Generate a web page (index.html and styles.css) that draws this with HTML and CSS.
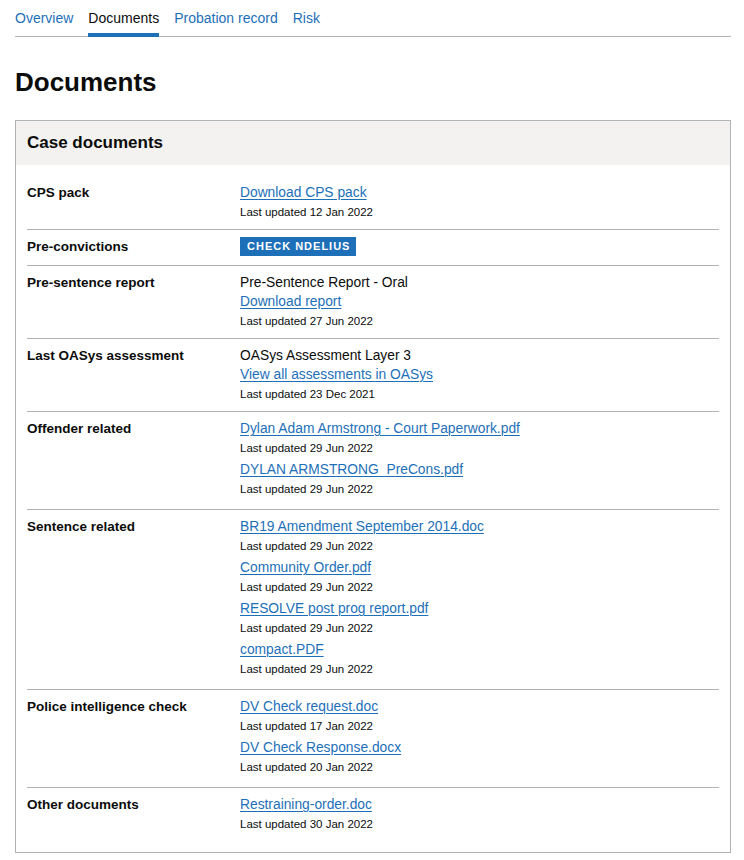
FILE: index.html
```html
<!DOCTYPE html>
<html lang="en">
<head>
<meta charset="utf-8">
<title>Documents</title>
<link rel="stylesheet" href="styles.css">
</head>
<body>
<div class="page">
  <nav class="subnav">
    <ul class="subnav-list">
      <li><a class="subnav-link" href="#">Overview</a></li>
      <li><a class="subnav-link is-active" href="#">Documents</a></li>
      <li><a class="subnav-link" href="#">Probation record</a></li>
      <li><a class="subnav-link" href="#">Risk</a></li>
    </ul>
  </nav>

  <h1 class="heading">Documents</h1>

  <section class="card">
    <h2 class="card-title">Case documents</h2>
    <dl class="summary">
      <div class="row">
        <dt class="key">CPS pack</dt>
        <dd class="value">
          <a class="link" href="#">Download CPS pack</a>
          <p class="meta">Last updated 12 Jan 2022</p>
        </dd>
      </div>
      <div class="row">
        <dt class="key">Pre-convictions</dt>
        <dd class="value"><span class="tag">Check NDelius</span></dd>
      </div>
      <div class="row">
        <dt class="key">Pre-sentence report</dt>
        <dd class="value">
          <p class="desc">Pre-Sentence Report - Oral</p>
          <a class="link" href="#">Download report</a>
          <p class="meta">Last updated 27 Jun 2022</p>
        </dd>
      </div>
      <div class="row">
        <dt class="key">Last OASys assessment</dt>
        <dd class="value">
          <p class="desc">OASys Assessment Layer 3</p>
          <a class="link" href="#">View all assessments in OASys</a>
          <p class="meta">Last updated 23 Dec 2021</p>
        </dd>
      </div>
      <div class="row">
        <dt class="key">Offender related</dt>
        <dd class="value">
          <div class="doc"><a class="link" href="#">Dylan Adam Armstrong - Court Paperwork.pdf</a><p class="meta">Last updated 29 Jun 2022</p></div>
          <div class="doc"><a class="link" href="#">DYLAN ARMSTRONG_PreCons.pdf</a><p class="meta">Last updated 29 Jun 2022</p></div>
        </dd>
      </div>
      <div class="row">
        <dt class="key">Sentence related</dt>
        <dd class="value">
          <div class="doc"><a class="link" href="#">BR19 Amendment September 2014.doc</a><p class="meta">Last updated 29 Jun 2022</p></div>
          <div class="doc"><a class="link" href="#">Community Order.pdf</a><p class="meta">Last updated 29 Jun 2022</p></div>
          <div class="doc"><a class="link" href="#">RESOLVE post prog report.pdf</a><p class="meta">Last updated 29 Jun 2022</p></div>
          <div class="doc"><a class="link" href="#">compact.PDF</a><p class="meta">Last updated 29 Jun 2022</p></div>
        </dd>
      </div>
      <div class="row">
        <dt class="key">Police intelligence check</dt>
        <dd class="value">
          <div class="doc"><a class="link" href="#">DV Check request.doc</a><p class="meta">Last updated 17 Jan 2022</p></div>
          <div class="doc"><a class="link" href="#">DV Check Response.docx</a><p class="meta">Last updated 20 Jan 2022</p></div>
        </dd>
      </div>
      <div class="row">
        <dt class="key">Other documents</dt>
        <dd class="value">
          <div class="doc"><a class="link" href="#">Restraining-order.doc</a><p class="meta">Last updated 30 Jan 2022</p></div>
        </dd>
      </div>
    </dl>
  </section>
</div>
</body>
</html>
```

FILE: styles.css
```css
* { box-sizing: border-box; }

html, body {
  margin: 0;
  padding: 0;
  background: #ffffff;
}

body {
  font-family: "Liberation Sans", Arial, sans-serif;
  color: #0b0c0c;
  font-size: 14px;
  line-height: 20px;
}

.page {
  padding: 0 13px 0 15px;
}

/* Sub navigation */
.subnav-list {
  list-style: none;
  margin: 0;
  padding: 0;
  display: flex;
  gap: 15px;
  border-bottom: 1px solid #b1b4b6;
}

.subnav-link {
  display: block;
  padding: 8px 0 5px;
  margin-bottom: -1px;
  border-bottom: 4px solid transparent;
  font-size: 14px;
  line-height: 20px;
  color: #1d70b8;
  text-decoration: none;
}

.subnav-link.is-active {
  color: #0b0c0c;
  border-bottom-color: #1d70b8;
}

/* Heading */
.heading {
  margin: 30px 0 23px;
  font-size: 26px;
  line-height: 30px;
  font-weight: 700;
}

/* Card */
.card {
  border: 1px solid #b1b4b6;
}

.card-title {
  margin: 0;
  padding: 0 11px;
  background: #f3f2f1;
  font-size: 17px;
  line-height: 44px;
  font-weight: 700;
}

.summary {
  margin: 0;
  padding: 11px 11px 8px;
}

.row {
  display: grid;
  grid-template-columns: 213px 1fr;
  padding: 7px 0 8px;
  border-bottom: 1px solid #b1b4b6;
}

.row:last-child {
  border-bottom: 0;
}

.key {
  margin: 0;
  font-weight: 700;
  font-size: 13.5px;
  line-height: 20px;
}

.value {
  margin: 0;
}

.link {
  display: block;
  width: max-content;
  color: #1d70b8;
  font-size: 13.8px;
  line-height: 20px;
  text-decoration: underline;
  text-decoration-thickness: 1px;
  text-underline-offset: 2px;
}

.desc {
  margin: 0;
  font-size: 13.8px;
  line-height: 19px;
}

.meta {
  margin: 0;
  font-size: 11.5px;
  line-height: 18px;
}

.doc {
  margin-bottom: 3px;
}

.tag {
  display: inline-block;
  background: #1d70b8;
  color: #ffffff;
  font-weight: 700;
  font-size: 11px;
  line-height: 15px;
  letter-spacing: 1px;
  text-transform: uppercase;
  padding: 2px 6px 2px 7px;
  vertical-align: top;
}
```
